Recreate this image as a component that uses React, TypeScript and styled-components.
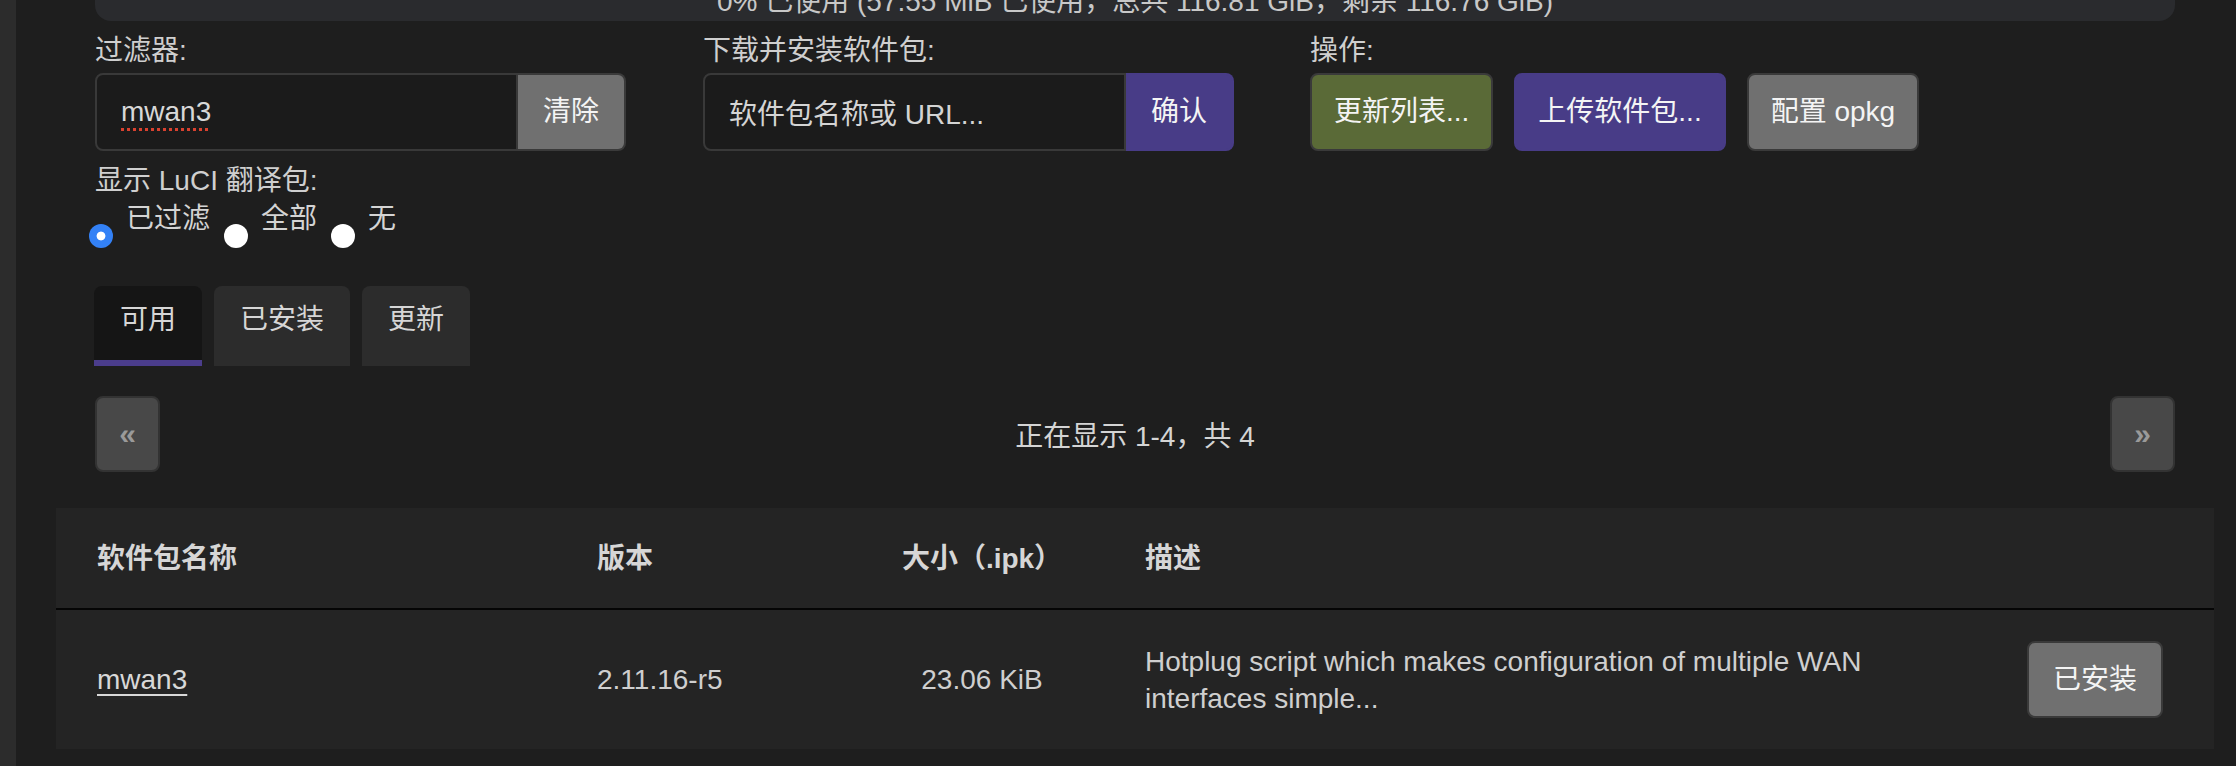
import styled, { createGlobalStyle } from "styled-components";

const GlobalStyle = createGlobalStyle`
  html, body {
    margin: 0;
    padding: 0;
    background: #1e1e1e;
  }
  body {
    font-family: "Liberation Sans", "Noto Sans CJK SC", sans-serif;
    font-size: 28px;
    color: #d2d2d2;
    overflow: hidden;
  }
  * {
    box-sizing: border-box;
  }
`;

const Shell = styled.div`
  display: flex;
  height: 766px;
  overflow: hidden;
`;

const SideStrip = styled.div`
  flex: none;
  width: 16px;
  background: #2c2c2c;
`;

const Main = styled.main`
  flex: 1;
  min-width: 0;
  padding: 0 22px 0 40px;
  background: #1e1e1e;
`;

const Section = styled.div`
  padding: 0 39px;
`;

// usage bar is scrolled mostly out of view in the shot
const UsageBar = styled.div`
  margin-top: -17px;
  height: 38px;
  border-radius: 16px;
  background: #2a2b2e;
  color: #c8c8c8;
  line-height: 38px;
  text-align: center;
  white-space: nowrap;
`;

const Controls = styled.div`
  display: grid;
  grid-template-columns: 608px 607px auto;
  margin-top: 9px;
`;

const Group = styled.div`
  display: flex;
  flex-direction: column;
`;

const FieldLabel = styled.div<{ $gap?: number }>`
  margin-top: ${(p) => p.$gap ?? 0}px;
  line-height: 42px;
  color: #cfcfcf;
`;

const InputRow = styled.div`
  display: flex;
  margin-top: 1px;
  height: 78px;
`;

const FieldBox = styled.div<{ $placeholder?: boolean }>`
  display: flex;
  align-items: center;
  width: 423px;
  height: 78px;
  padding: 0 24px;
  border: 2px solid #393939;
  border-radius: 8px 0 0 8px;
  background: #1b1b1b;
  color: ${(p) => (p.$placeholder ? "#d4d4d4" : "#d8d8d8")};
  white-space: nowrap;
`;

const SpellMarked = styled.span`
  text-decoration: underline dotted #d9412f;
  text-decoration-thickness: 3px;
  text-underline-offset: 7px;
`;

const tones = {
  gray: { bg: "#707070", border: "#3a3a3a" },
  green: { bg: "#5a6a37", border: "#3a3a3a" },
  purple: { bg: "#483c87", border: "#483c87" },
};

const Button = styled.button<{ $tone: keyof typeof tones; $attached?: boolean }>`
  flex: none;
  height: 78px;
  margin: 0;
  padding: 0 ${(p) => (p.$attached ? 25 : 22)}px;
  border: 2px solid ${(p) => tones[p.$tone].border};
  border-left-width: ${(p) => (p.$attached ? 0 : 2)}px;
  border-radius: ${(p) => (p.$attached ? "0 8px 8px 0" : "8px")};
  background: ${(p) => tones[p.$tone].bg};
  color: #f4f4f4;
  font: inherit;
  line-height: 1;
  white-space: nowrap;
`;

const ActionRow = styled.div`
  display: flex;
  gap: 21px;
  margin-top: 1px;
  height: 78px;
`;

const RadioRow = styled.div`
  display: flex;
  align-items: flex-start;
  margin: -1px 0 0 -6px;
  line-height: 36px;
  color: #d4d4d4;
`;

const Radio = styled.input.attrs({ type: "radio" })`
  appearance: none;
  flex: none;
  width: 24px;
  height: 24px;
  margin: 23px 13px 0 0;
  border-radius: 50%;
  background: #ffffff;

  &:checked {
    background: radial-gradient(circle, #ffffff 0 4px, #3381f6 4.8px);
  }
`;

const RadioText = styled.span`
  margin-right: 14px;
`;

const TabBar = styled.div`
  display: flex;
  gap: 12px;
  margin: 38px 0 0 -1px;
`;

const Tab = styled.div<{ $active?: boolean }>`
  height: 80px;
  padding: 0 26px 6px;
  border-bottom: 6px solid ${(p) => (p.$active ? "#4b3d8c" : "transparent")};
  border-radius: 8px 8px 0 0;
  background: ${(p) => (p.$active ? "#151515" : "#2c2c2c")};
  color: #d6d6d6;
  line-height: 68px;
`;

const Pager = styled.div`
  display: flex;
  align-items: center;
  justify-content: space-between;
  margin-top: 30px;
  height: 76px;
`;

const PageButton = styled.div`
  display: flex;
  align-items: center;
  justify-content: center;
  width: 65px;
  height: 76px;
  border: 2px solid #333333;
  border-radius: 8px;
  background: #484848;
  color: #9a9a9a;
  font-size: 30px;
  font-weight: 700;
`;

const PageInfo = styled.div`
  color: #d4d4d4;
`;

const Table = styled.div`
  margin-top: 36px;
  background: #242424;
`;

const Row = styled.div<{ $head?: boolean }>`
  display: grid;
  grid-template-columns: 500px 304px 244px 886px 1fr;
  align-items: center;
  min-height: ${(p) => (p.$head ? 102 : 139)}px;
  border-bottom: ${(p) => (p.$head ? "2px solid #050505" : "none")};
  font-weight: ${(p) => (p.$head ? 700 : 400)};
  color: ${(p) => (p.$head ? "#d6d6d6" : "#cfcfcf")};
`;

const Cell = styled.div<{ $align?: "left" | "center"; $pr?: number }>`
  padding: 0 ${(p) => p.$pr ?? 41}px 0 41px;
  text-align: ${(p) => p.$align ?? "left"};
  line-height: 37px;
`;

const ActionCell = styled.div`
  display: flex;
  justify-content: flex-end;
  padding-right: 51px;
`;

const PkgLink = styled.a`
  color: #d8d8d8;
  text-decoration: underline;
  text-underline-offset: 5px;
  text-decoration-thickness: 2px;
`;

const InstalledButton = styled(Button)`
  height: 77px;
  padding: 0 24px;
`;

export default function App() {
  return (
    <>
      <GlobalStyle />
      <Shell>
        <SideStrip />
        <Main>
          <Section>
            <UsageBar>0% 已使用 (57.55 MiB 已使用，总共 116.81 GiB，剩余 116.76 GiB)</UsageBar>

            <Controls>
              <Group>
                <FieldLabel>过滤器:</FieldLabel>
                <InputRow>
                  <FieldBox>
                    <SpellMarked>mwan3</SpellMarked>
                  </FieldBox>
                  <Button $tone="gray" $attached>
                    清除
                  </Button>
                </InputRow>
              </Group>
              <Group>
                <FieldLabel>下载并安装软件包:</FieldLabel>
                <InputRow>
                  <FieldBox $placeholder>软件包名称或 URL...</FieldBox>
                  <Button $tone="purple" $attached>
                    确认
                  </Button>
                </InputRow>
              </Group>
              <Group>
                <FieldLabel>操作:</FieldLabel>
                <ActionRow>
                  <Button $tone="green">更新列表...</Button>
                  <Button $tone="purple">上传软件包...</Button>
                  <Button $tone="gray">配置 opkg</Button>
                </ActionRow>
              </Group>
            </Controls>

            <FieldLabel $gap={9}>显示 LuCI 翻译包:</FieldLabel>
            <RadioRow>
              <Radio name="i18n" defaultChecked />
              <RadioText>已过滤</RadioText>
              <Radio name="i18n" />
              <RadioText>全部</RadioText>
              <Radio name="i18n" />
              <RadioText>无</RadioText>
            </RadioRow>

            <TabBar>
              <Tab $active>可用</Tab>
              <Tab>已安装</Tab>
              <Tab>更新</Tab>
            </TabBar>

            <Pager>
              <PageButton>«</PageButton>
              <PageInfo>正在显示 1-4，共 4</PageInfo>
              <PageButton>»</PageButton>
            </Pager>
          </Section>

          <Table>
            <Row $head>
              <Cell>软件包名称</Cell>
              <Cell>版本</Cell>
              <Cell $align="center">大小（.ipk）</Cell>
              <Cell>描述</Cell>
              <div />
            </Row>
            <Row>
              <Cell>
                <PkgLink href="#">mwan3</PkgLink>
              </Cell>
              <Cell>2.11.16-r5</Cell>
              <Cell $align="center">23.06 KiB</Cell>
              <Cell $pr={80}>
                Hotplug script which makes configuration of multiple WAN interfaces simple...
              </Cell>
              <ActionCell>
                <InstalledButton $tone="gray">已安装</InstalledButton>
              </ActionCell>
            </Row>
          </Table>
        </Main>
      </Shell>
    </>
  );
}
